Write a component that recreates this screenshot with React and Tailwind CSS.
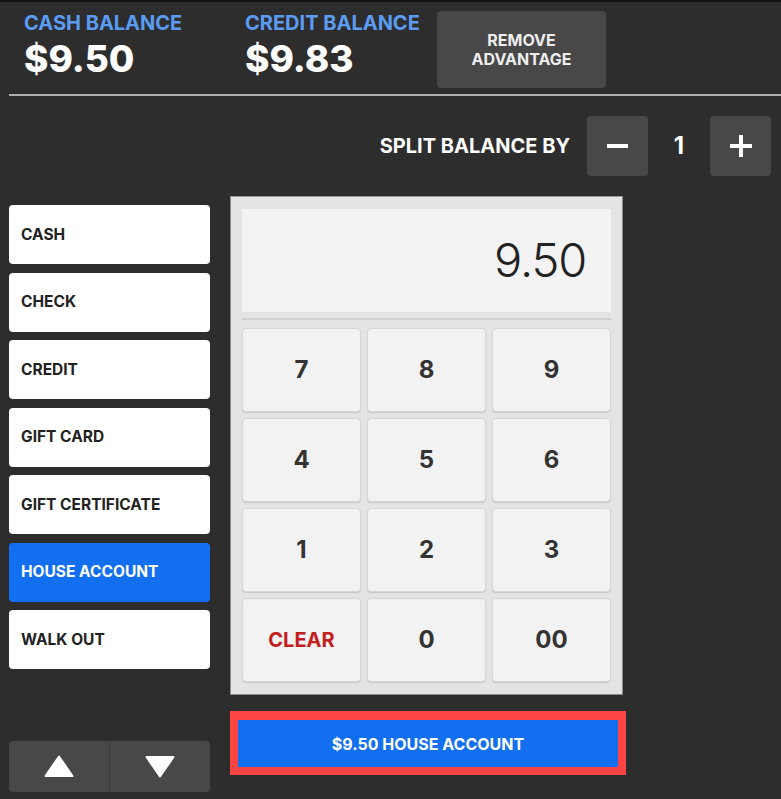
import React, { useState } from "react";

const methods = [
  "CASH",
  "CHECK",
  "CREDIT",
  "GIFT CARD",
  "GIFT CERTIFICATE",
  "HOUSE ACCOUNT",
  "WALK OUT",
];

const keys = ["7", "8", "9", "4", "5", "6", "1", "2", "3", "CLEAR", "0", "00"];

export default function App() {
  const [split, setSplit] = useState(1);
  const [method, setMethod] = useState("HOUSE ACCOUNT");
  const amount = "9.50";

  return (
    <div
      className="w-[781px] h-[799px] bg-[#2d2d2d] border-t-2 border-[#111] overflow-hidden"
      style={{ fontFamily: "Inter, 'Noto Sans', sans-serif" }}
    >
      {/* header balances */}
      <div className="flex items-start pl-6 pt-[9px] h-[92px]">
        <div className="w-[221px]">
          <div className="text-[#5b9cf2] text-[20px] font-bold leading-[24px]">CASH BALANCE</div>
          <div className="text-white text-[37px] font-extrabold leading-[44px] mt-[2px]">$9.50</div>
        </div>
        <div className="w-[192px]">
          <div className="text-[#5b9cf2] text-[20px] font-bold leading-[24px]">CREDIT BALANCE</div>
          <div className="text-white text-[37px] font-extrabold leading-[44px] mt-[2px]">$9.83</div>
        </div>
        <button className="w-[169px] h-[77px] rounded-[4px] bg-[#484848] text-[#eeeeee] text-[16px] font-bold leading-[19px]">
          REMOVE
          <br />
          ADVANTAGE
        </button>
      </div>
      <div className="ml-[9px] h-[2px] bg-[#b0b0b0]" />

      {/* split */}
      <div className="flex items-center justify-end pr-[10px] mt-[20px]">
        <span className="text-white text-[20px] font-bold mr-[17px]">SPLIT BALANCE BY</span>
        <button
          onClick={() => setSplit(Math.max(1, split - 1))}
          className="w-[61px] h-[60px] rounded-[4px] bg-[#484848] flex items-center justify-center"
        >
          <span className="block w-[21px] h-[4px] bg-white" />
        </button>
        <span className="w-[62px] text-center text-white text-[24px] font-bold">{split}</span>
        <button
          onClick={() => setSplit(split + 1)}
          className="w-[61px] h-[60px] rounded-[4px] bg-[#484848] flex items-center justify-center"
        >
          <svg width="22" height="22" viewBox="0 0 22 22">
            <rect x="9" y="0" width="4" height="22" fill="white" />
            <rect x="0" y="9" width="22" height="4" fill="white" />
          </svg>
        </button>
      </div>

      {/* body */}
      <div className="flex items-start mt-[20px] pl-[9px]">
        <div className="w-[201px] pt-[9px] flex flex-col">
          <div className="flex flex-col gap-[8.5px]">
            {methods.map((m) => (
              <button
                key={m}
                onClick={() => setMethod(m)}
                className={
                  m === method
                    ? "h-[59px] rounded-[4px] bg-[#1270f0] text-white text-left pl-3 text-[15.5px] font-bold"
                    : "h-[59px] rounded-[4px] bg-white text-[#222] text-left pl-3 text-[15.5px] font-bold"
                }
              >
                {m}
              </button>
            ))}
          </div>
          <div className="mt-[72px] h-[51px] rounded-[4px] bg-[#484848] flex overflow-hidden">
            <button className="flex-1 flex items-center justify-center border-r border-[#3a3a3a]">
              <svg width="30" height="23" viewBox="0 0 30 23">
                <path d="M15 1.5 L28.5 21 L1.5 21 Z" fill="white" stroke="white" strokeWidth="2" strokeLinejoin="round" />
              </svg>
            </button>
            <button className="flex-1 flex items-center justify-center">
              <svg width="30" height="23" viewBox="0 0 30 23">
                <path d="M1.5 2 L28.5 2 L15 21.5 Z" fill="white" stroke="white" strokeWidth="2" strokeLinejoin="round" />
              </svg>
            </button>
          </div>
        </div>

        <div className="ml-[20px] w-[396px]">
          <div className="w-[393px] h-[499px] bg-[#e4e4e4] border border-[#8a8a8a] border-t-[#999] px-[11px] pt-[12px]">
            <div className="h-[103px] bg-[#f3f3f3] flex items-center justify-end pr-[25px]">
              <span className="text-[#222] text-[47px] font-light tracking-tight">{amount}</span>
            </div>
            <div className="mt-[6px] h-[2px] bg-[#cfcfcf]" />
            <div className="mt-[8px] grid grid-cols-3 gap-[6px]">
              {keys.map((k) => (
                <button
                  key={k}
                  className={
                    k === "CLEAR"
                      ? "h-[84px] rounded-[4px] bg-[#f2f2f2] border border-[#d6d6d6] shadow-[0_1px_1px_rgba(0,0,0,0.12)] text-[#c22020] text-[20px] font-bold"
                      : "h-[84px] rounded-[4px] bg-[#f2f2f2] border border-[#d6d6d6] shadow-[0_1px_1px_rgba(0,0,0,0.12)] text-[#333] text-[24px] font-bold"
                  }
                >
                  {k}
                </button>
              ))}
            </div>
          </div>
          <div className="mt-[16px] border-[8px] border-[#ff4444] border-t-[9px]">
            <button className="w-full h-[47px] bg-[#1270f0] text-white text-[16px] font-bold">
              ${amount} HOUSE ACCOUNT
            </button>
          </div>
        </div>
      </div>
    </div>
  );
}
